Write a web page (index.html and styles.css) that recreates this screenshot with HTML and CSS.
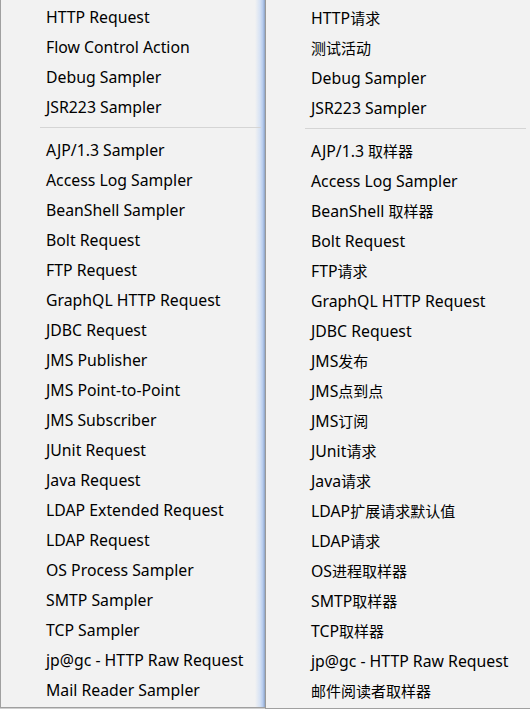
FILE: index.html
```html
<!DOCTYPE html>
<html>
<head>
<meta charset="utf-8">
<link rel="stylesheet" href="styles.css">
</head>
<body>
<div class="menus">
  <div class="menu menu-left">
    <ul class="group">
      <li class="item">HTTP Request</li>
      <li class="item">Flow Control Action</li>
      <li class="item">Debug Sampler</li>
      <li class="item">JSR223 Sampler</li>
    </ul>
    <div class="sep"></div>
    <ul class="group">
      <li class="item">AJP/1.3 Sampler</li>
      <li class="item">Access Log Sampler</li>
      <li class="item">BeanShell Sampler</li>
      <li class="item">Bolt Request</li>
      <li class="item">FTP Request</li>
      <li class="item">GraphQL HTTP Request</li>
      <li class="item">JDBC Request</li>
      <li class="item">JMS Publisher</li>
      <li class="item">JMS Point-to-Point</li>
      <li class="item">JMS Subscriber</li>
      <li class="item">JUnit Request</li>
      <li class="item">Java Request</li>
      <li class="item">LDAP Extended Request</li>
      <li class="item">LDAP Request</li>
      <li class="item">OS Process Sampler</li>
      <li class="item">SMTP Sampler</li>
      <li class="item">TCP Sampler</li>
      <li class="item">jp@gc - HTTP Raw Request</li>
      <li class="item">Mail Reader Sampler</li>
    </ul>
  </div>
  <div class="menu menu-right">
    <ul class="group">
      <li class="item">HTTP<span class="zh">请求</span></li>
      <li class="item"><span class="zh">测试活动</span></li>
      <li class="item">Debug Sampler</li>
      <li class="item">JSR223 Sampler</li>
    </ul>
    <div class="sep"></div>
    <ul class="group">
      <li class="item">AJP/1.3 <span class="zh">取样器</span></li>
      <li class="item">Access Log Sampler</li>
      <li class="item">BeanShell <span class="zh">取样器</span></li>
      <li class="item">Bolt Request</li>
      <li class="item">FTP<span class="zh">请求</span></li>
      <li class="item">GraphQL HTTP Request</li>
      <li class="item">JDBC Request</li>
      <li class="item">JMS<span class="zh">发布</span></li>
      <li class="item">JMS<span class="zh">点到点</span></li>
      <li class="item">JMS<span class="zh">订阅</span></li>
      <li class="item">JUnit<span class="zh">请求</span></li>
      <li class="item">Java<span class="zh">请求</span></li>
      <li class="item">LDAP<span class="zh">扩展请求默认值</span></li>
      <li class="item">LDAP<span class="zh">请求</span></li>
      <li class="item">OS<span class="zh">进程取样器</span></li>
      <li class="item">SMTP<span class="zh">取样器</span></li>
      <li class="item">TCP<span class="zh">取样器</span></li>
      <li class="item">jp@gc - HTTP Raw Request</li>
      <li class="item"><span class="zh">邮件阅读者取样器</span></li>
    </ul>
  </div>
</div>
</body>
</html>
```
FILE: styles.css
```css
html, body {
  margin: 0;
  padding: 0;
  background: #f2f2f2;
  width: 530px;
  height: 709px;
  overflow: hidden;
}
.menus {
  display: flex;
  align-items: flex-start;
  font-family: "Noto Sans", "Noto Sans CJK SC", sans-serif;
  font-size: 15.8px;
  color: #000;
}
.menu {
  box-sizing: border-box;
  width: 265px;
  background: #f2f2f2;
  border-left: 1px solid #a0a0a0;
  border-bottom: 1px solid #a0a0a0;
}
.menu-left {
  padding-top: 2px;
  padding-bottom: 2px;
  background: linear-gradient(to right, #f2f2f2 0, #f2f2f2 254px, #d6e2f4 259px, #b4caee 262px, #9db4d8 263px, #8ea2c2 264px);
  box-shadow: 0 1px 0 #cfcfcf;
}
.menu-right {
  padding-top: 3px;
  padding-bottom: 2px;
  border-left-color: #9a9a9a;
}
.group {
  list-style: none;
  margin: 0;
  padding: 0;
}
.item {
  height: 30px;
  line-height: 30px;
  padding-left: 45px;
  white-space: nowrap;
}
.zh {
  font-family: "Noto Sans CJK SC", sans-serif;
  font-size: 15px;
}
.sep {
  margin: 5px 4px 7px 39px;
  height: 1px;
  background: #d5d5d5;
}
```
